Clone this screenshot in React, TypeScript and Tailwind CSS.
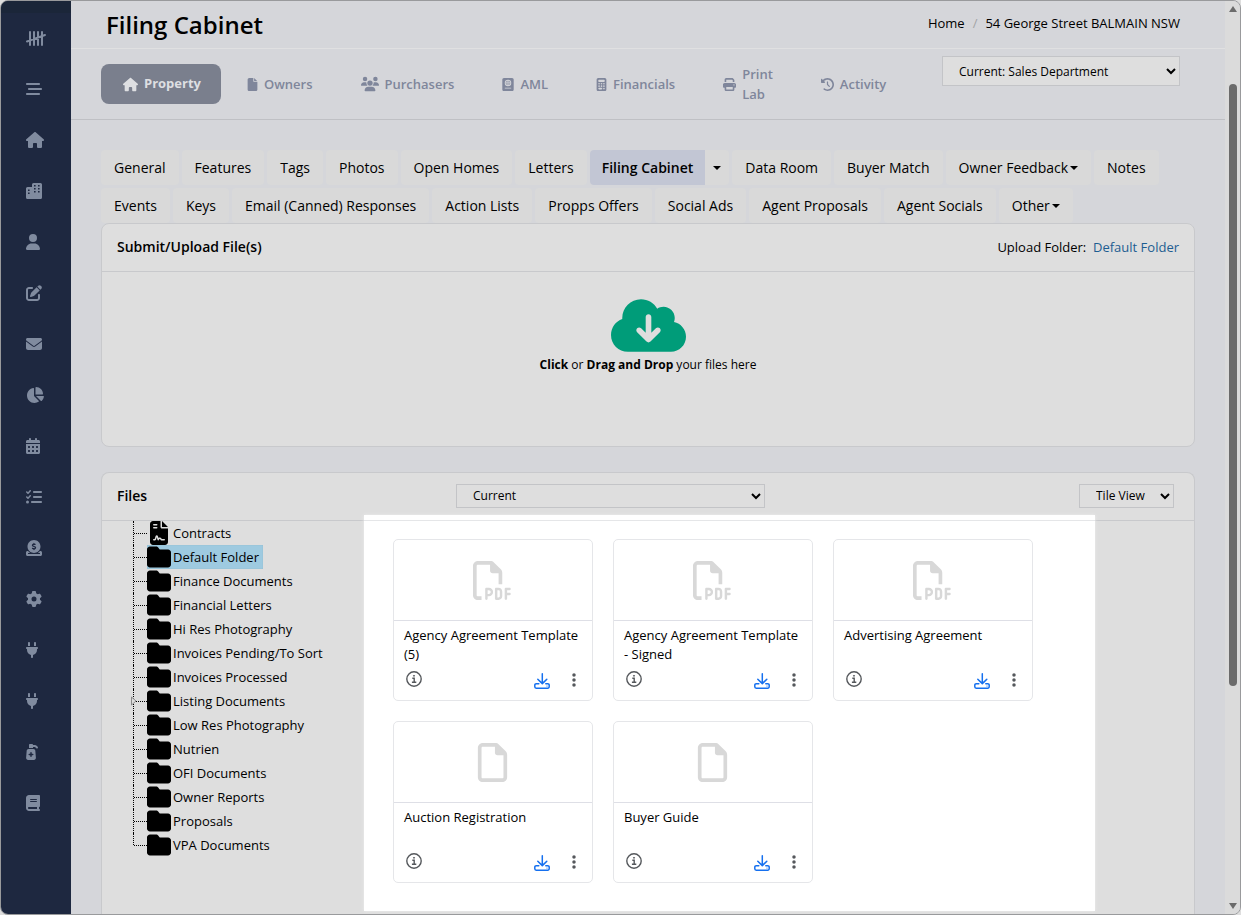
import type { ReactNode } from "react";
import {
  FaBarsStaggered,
  FaBook,
  FaCalculator,
  FaCalendarDays,
  FaChartPie,
  FaCircleDollarToSlot,
  FaClockRotateLeft,
  FaCloudArrowDown,
  FaEllipsisVertical,
  FaEnvelope,
  FaFile,
  FaFileContract,
  FaFolder,
  FaGear,
  FaHouse,
  FaListCheck,
  FaPassport,
  FaPenToSquare,
  FaPlug,
  FaPrint,
  FaPumpMedical,
  FaRegFile,
  FaRegFilePdf,
  FaUser,
  FaUsers,
} from "react-icons/fa6";

function TallyIcon() {
  return (
    <svg viewBox="0 0 20 16" className="h-4 w-5" fill="none" stroke="currentColor" strokeWidth="2" strokeLinecap="round">
      <path d="M4 2v13M8 2v13M12 2v13M16 2v13M1 11.500 19 5" />
    </svg>
  );
}

function BuildingsIcon() {
  return (
    <svg viewBox="0 0 16 16" className="size-4" fill="currentColor" fillRule="evenodd">
      <path d="M7.500 0h7A1.500 1.500 0 0 1 16 1.500v13a1.500 1.500 0 0 1-1.500 1.500h-13A1.500 1.500 0 0 1 0 14.500v-9A1.500 1.500 0 0 1 1.500 4H6V1.500A1.500 1.500 0 0 1 7.500 0ZM8 2v1.600h1.600V2H8Zm4 0v1.600h1.600V2H12ZM8 5v1.600h1.600V5H8Zm4 0v1.600h1.600V5H12ZM8 8v1.600h1.600V8H8Zm4 0v1.600h1.600V8H12ZM2 6.500v1.600h1.600V6.500H2Zm0 3v1.600h1.600V9.500H2Z" />
    </svg>
  );
}

function InfoIcon() {
  return (
    <svg viewBox="0 0 16 16" className="size-4" fill="none" stroke="currentColor" strokeWidth="1.400">
      <circle cx="8" cy="8" r="7.200" />
      <path d="M6.300 7.200H8.200v4M5.900 11.200h4.400" />
      <circle cx="8" cy="4.800" r=".5" fill="currentColor" strokeWidth="1" />
    </svg>
  );
}

function DownloadIcon() {
  return (
    <svg viewBox="0 0 16 16" className="size-4" fill="none" stroke="currentColor" strokeWidth="1.500" strokeLinecap="round" strokeLinejoin="round">
      <path d="M8.300.8v9.500M3.800 6.200l4.500 4.400 4.500-4.400" />
      <path d="M4.800 10.700H2.200a1.400 1.400 0 0 0-1.400 1.400v1.700a1.400 1.400 0 0 0 1.400 1.400h11.600a1.400 1.400 0 0 0 1.400-1.400v-1.700a1.400 1.400 0 0 0-1.400-1.400h-2" />
      <path d="M13 13h.01" strokeWidth="1.200" />
    </svg>
  );
}

function Caret() {
  return <span className="inline-block border-x-4 border-t-4 border-x-transparent border-t-black" />;
}

const sideLinks: { label: string; icon: ReactNode }[] = [
  { label: "Dashboard", icon: <TallyIcon /> },
  { label: "Menu", icon: <FaBarsStaggered /> },
  { label: "Home", icon: <FaHouse className="size-[18px]" /> },
  { label: "Properties", icon: <BuildingsIcon /> },
  { label: "Contacts", icon: <FaUser className="-ml-px" /> },
  { label: "Compose", icon: <FaPenToSquare /> },
  { label: "Mail", icon: <FaEnvelope /> },
  { label: "Reports", icon: <FaChartPie className="size-[18px]" /> },
  { label: "Calendar", icon: <FaCalendarDays className="-ml-px" /> },
  { label: "Tasks", icon: <FaListCheck /> },
  { label: "Payments", icon: <FaCircleDollarToSlot /> },
  { label: "Settings", icon: <FaGear /> },
  { label: "Integrations", icon: <FaPlug className="-ml-0.5" /> },
  { label: "Plugins", icon: <FaPlug className="-ml-0.5" /> },
  { label: "Supplies", icon: <FaPumpMedical className="-ml-0.5" /> },
  { label: "Library", icon: <FaBook className="-ml-px" /> },
];

const sections = [
  { label: "Owners", icon: <FaFile className="h-[13px] w-[11px]" /> },
  { label: "Purchasers", icon: <FaUsers className="size-[18px]" /> },
  { label: "AML", icon: <FaPassport className="h-[13px] w-3" /> },
  { label: "Financials", icon: <FaCalculator className="h-[13px] w-[11px]" /> },
  { label: "Print Lab", icon: <FaPrint className="size-[13px] shrink-0" /> },
  { label: "Activity", icon: <FaClockRotateLeft className="size-[13px]" /> },
];

const tabs = [
  { label: "General" },
  { label: "Features" },
  { label: "Tags" },
  { label: "Photos" },
  { label: "Open Homes" },
  { label: "Letters" },
  { label: "Filing Cabinet", active: true },
  { label: "Data Room" },
  { label: "Buyer Match" },
  { label: "Owner Feedback", caret: true },
  { label: "Notes" },
  { label: "Events" },
  { label: "Keys" },
  { label: "Email (Canned) Responses" },
  { label: "Action Lists" },
  { label: "Propps Offers" },
  { label: "Social Ads" },
  { label: "Agent Proposals" },
  { label: "Agent Socials" },
  { label: "Other", caret: true },
];

const folders = [
  "Contracts",
  "Default Folder",
  "Finance Documents",
  "Financial Letters",
  "Hi Res Photography",
  "Invoices Pending/To Sort",
  "Invoices Processed",
  "Listing Documents",
  "Low Res Photography",
  "Nutrien",
  "OFI Documents",
  "Owner Reports",
  "Proposals",
  "VPA Documents",
];

const files = [
  { name: "Agency Agreement Template (5)", pdf: true },
  { name: "Agency Agreement Template - Signed", pdf: true },
  { name: "Advertising Agreement", pdf: true },
  { name: "Auction Registration", pdf: false },
  { name: "Buyer Guide", pdf: false },
];

function Sidebar() {
  return (
    <nav className="w-[70px] shrink-0 border-t-[12px] border-[#1b2639] bg-[#1e2840] text-base text-[#808b9f]">
      {sideLinks.map((link) => (
        <a key={link.label} href="#" aria-label={link.label} className="flex h-[51px] items-center pl-[25px] first:h-[50px]">
          {link.icon}
        </a>
      ))}
    </nav>
  );
}

function FolderRow({ name, last }: { name: string; last: boolean }) {
  const selected = name === "Default Folder";
  return (
    <li className="relative flex h-6 items-center">
      <span className={`absolute left-0 top-0 border-l border-dotted border-black ${last ? "h-3" : "h-6"}`} />
      {name === "Listing Documents" && (
        <svg viewBox="0 0 6 10" className="absolute -left-0.5 top-[7px] h-2.5 w-1.5" fill="#dedede" stroke="#8a8a8a">
          <path d="M.5 1v8L5 5Z" />
        </svg>
      )}
      <span className="ml-px w-[13px] border-t border-dotted border-black" />
      <a
        href="#"
        className={`flex h-6 items-center gap-0.5 pr-1 ${selected ? "bg-[#9ecae0] shadow-[inset_0_0_1px_#7f9fae]" : ""}`}
      >
        {name === "Contracts" ? <FaFileContract className="size-6" /> : <FaFolder className="size-6" />}
        <span className="pt-0.5">{name}</span>
      </a>
    </li>
  );
}

function FileTile({ name, pdf }: { name: string; pdf: boolean }) {
  return (
    <article className="flex h-[162px] w-[200px] flex-col rounded-[5px] border border-[#e5e6e9]">
      <div className="flex h-20 items-center justify-center pr-0.5 text-[39px] text-[#d8d8d8]">
        {pdf ? <FaRegFilePdf /> : <FaRegFile />}
      </div>
      <h3 className="h-12 border-t border-[#dedfe6] px-2.5 pt-[5px] leading-[19px]">{name}</h3>
      <div className="flex items-center pl-3 pr-2.5 pt-px text-[#55585c]">
        <button aria-label={`Details of ${name}`} className="mr-auto">
          <InfoIcon />
        </button>
        <button aria-label={`Download ${name}`} className="mr-4 pt-1 text-[#1570ef]">
          <DownloadIcon />
        </button>
        <button aria-label={`More actions for ${name}`} className="pt-px text-base">
          <FaEllipsisVertical />
        </button>
      </div>
    </article>
  );
}

export default function App() {
  return (
    <div className="h-screen bg-[#dedede] font-['Open_Sans',sans-serif] text-[13px] text-black">
      <div className="flex h-full overflow-hidden rounded-lg border border-[#999a9c] bg-[#d5d6da]">
        <Sidebar />

        <main className="flex min-w-0 flex-1 flex-col">
          <header className="flex h-12 shrink-0 items-center justify-between border-b border-[#e0e0e1] pl-[35px] pr-[45px]">
            <h1 className="text-2xl font-semibold">Filing Cabinet</h1>
            <nav className="flex gap-2 pb-0.5">
              <a href="#">Home</a>
              <span className="text-[#a3a4a6]">/</span>
              <a href="#">54 George Street BALMAIN NSW</a>
            </nav>
          </header>

          <div className="flex h-[71px] shrink-0 items-start justify-between border-b border-[#bfc0c4] pl-[30px] pr-[45px]">
            <nav className="flex h-[70px] items-center gap-1 font-semibold text-[#7f869b]">
              <a href="#" className="flex h-10 items-center gap-1.5 rounded-lg bg-[#7a7f8d] pl-[22px] pr-5 text-[#dedfe2]">
                <FaHouse className="size-[15px]" />
                <span className="font-bold">Property</span>
              </a>
              {sections.map((section) => (
                <a key={section.label} href="#" className="flex items-center gap-1.5 px-[22px] leading-5">
                  {section.icon}
                  <span className={section.label === "Print Lab" ? "w-min" : ""}>{section.label}</span>
                </a>
              ))}
            </nav>
            <select aria-label="Department" className="mt-[7px] h-[30px] w-[238px] border border-[#c3c4c7] bg-[#dedede] pl-3 text-xs">
              <option>Current: Sales Department</option>
            </select>
          </div>

          <div className="flex min-h-0 flex-1 flex-col px-[30px] pt-[30px]">
            <nav className="flex flex-wrap gap-[3px] text-sm">
              {tabs.map((tab) =>
                tab.active ? (
                  <div key={tab.label} className="flex rounded bg-[#d9d9d9]">
                    <a href="#" className="flex h-[35px] items-center rounded-l bg-[#c2c6d4] px-3 font-semibold">
                      {tab.label}
                    </a>
                    <button aria-label="More filing cabinet options" className="flex items-center px-2">
                      <Caret />
                    </button>
                  </div>
                ) : (
                  <a key={tab.label} href="#" className="flex h-[35px] items-center gap-0.5 rounded bg-[#d9d9d9] px-[13px]">
                    {tab.label}
                    {tab.caret && <Caret />}
                  </a>
                )
              )}
            </nav>

            <section className="h-56 shrink-0 rounded-lg border border-[#c8c9cc] bg-[#dedede]">
              <div className="flex h-12 items-center justify-between border-b border-[#c8c9cc] px-[15px]">
                <h2 className="pb-0.5 text-sm font-semibold">Submit/Upload File(s)</h2>
                <p>
                  Upload Folder:&nbsp; <a href="#" className="text-[#1d5d91]">Default Folder</a>
                </p>
              </div>
              <button className="flex w-full flex-col items-center pt-4 text-xs">
                <FaCloudArrowDown className="h-[75px] w-[75px] text-[#009c79]" />
                <span className="-mt-1.5">
                  <b>Click</b> or <b>Drag and Drop</b> your files here
                </span>
              </button>
            </section>

            <section className="mt-[25px] flex min-h-0 flex-1 flex-col rounded-t-lg border border-b-0 border-[#c8c9cc] bg-[#dedede]">
              <div className="grid h-12 shrink-0 grid-cols-[339px_minmax(0,309px)_1fr] items-center border-b border-[#c8c9cc] pb-0.5 pl-[15px] pr-5">
                <h2 className="text-sm font-semibold">Files</h2>
                <select aria-label="File status" className="h-6 border border-[#c3c4c7] pl-3 text-xs">
                  <option>Current</option>
                </select>
                <select aria-label="View" className="h-6 w-[95px] justify-self-end border border-[#c3c4c7] pl-3 text-xs">
                  <option>Tile View</option>
                </select>
              </div>
              <div className="flex min-h-0 flex-1">
                <ul className="w-[262px] shrink-0 pl-[31px]">
                  {folders.map((name, i) => (
                    <FolderRow key={name} name={name} last={i === folders.length - 1} />
                  ))}
                </ul>
                <div className="relative mr-[99px] flex-1">
                  {/* spotlight behind the tiles, reaching over the header rule */}
                  <div className="absolute -top-1.5 bottom-[3px] w-full bg-white pt-[5px] shadow-[0_0_3px_#eeeeee]">
                    <div className="border-t border-[#e5e6e8]" />
                  </div>
                  <div className="relative flex flex-wrap gap-5 pl-[29px] pt-[18px]">
                    {files.map((file) => (
                      <FileTile key={file.name} {...file} />
                    ))}
                  </div>
                </div>
              </div>
            </section>
          </div>
        </main>

        {/* scroll track */}
        <div className="flex w-[15px] shrink-0 flex-col items-center bg-[#dbdbdb] py-[5px]">
          <span className="border-x-4 border-b-[6px] border-x-transparent border-b-[#6b6b6b]" />
          <span className="mt-[72px] h-2/3 w-2 rounded-full bg-[#6b6b6b]" />
          <span className="mt-auto border-x-4 border-t-[6px] border-x-transparent border-t-[#6b6b6b]" />
        </div>
      </div>
    </div>
  );
}
